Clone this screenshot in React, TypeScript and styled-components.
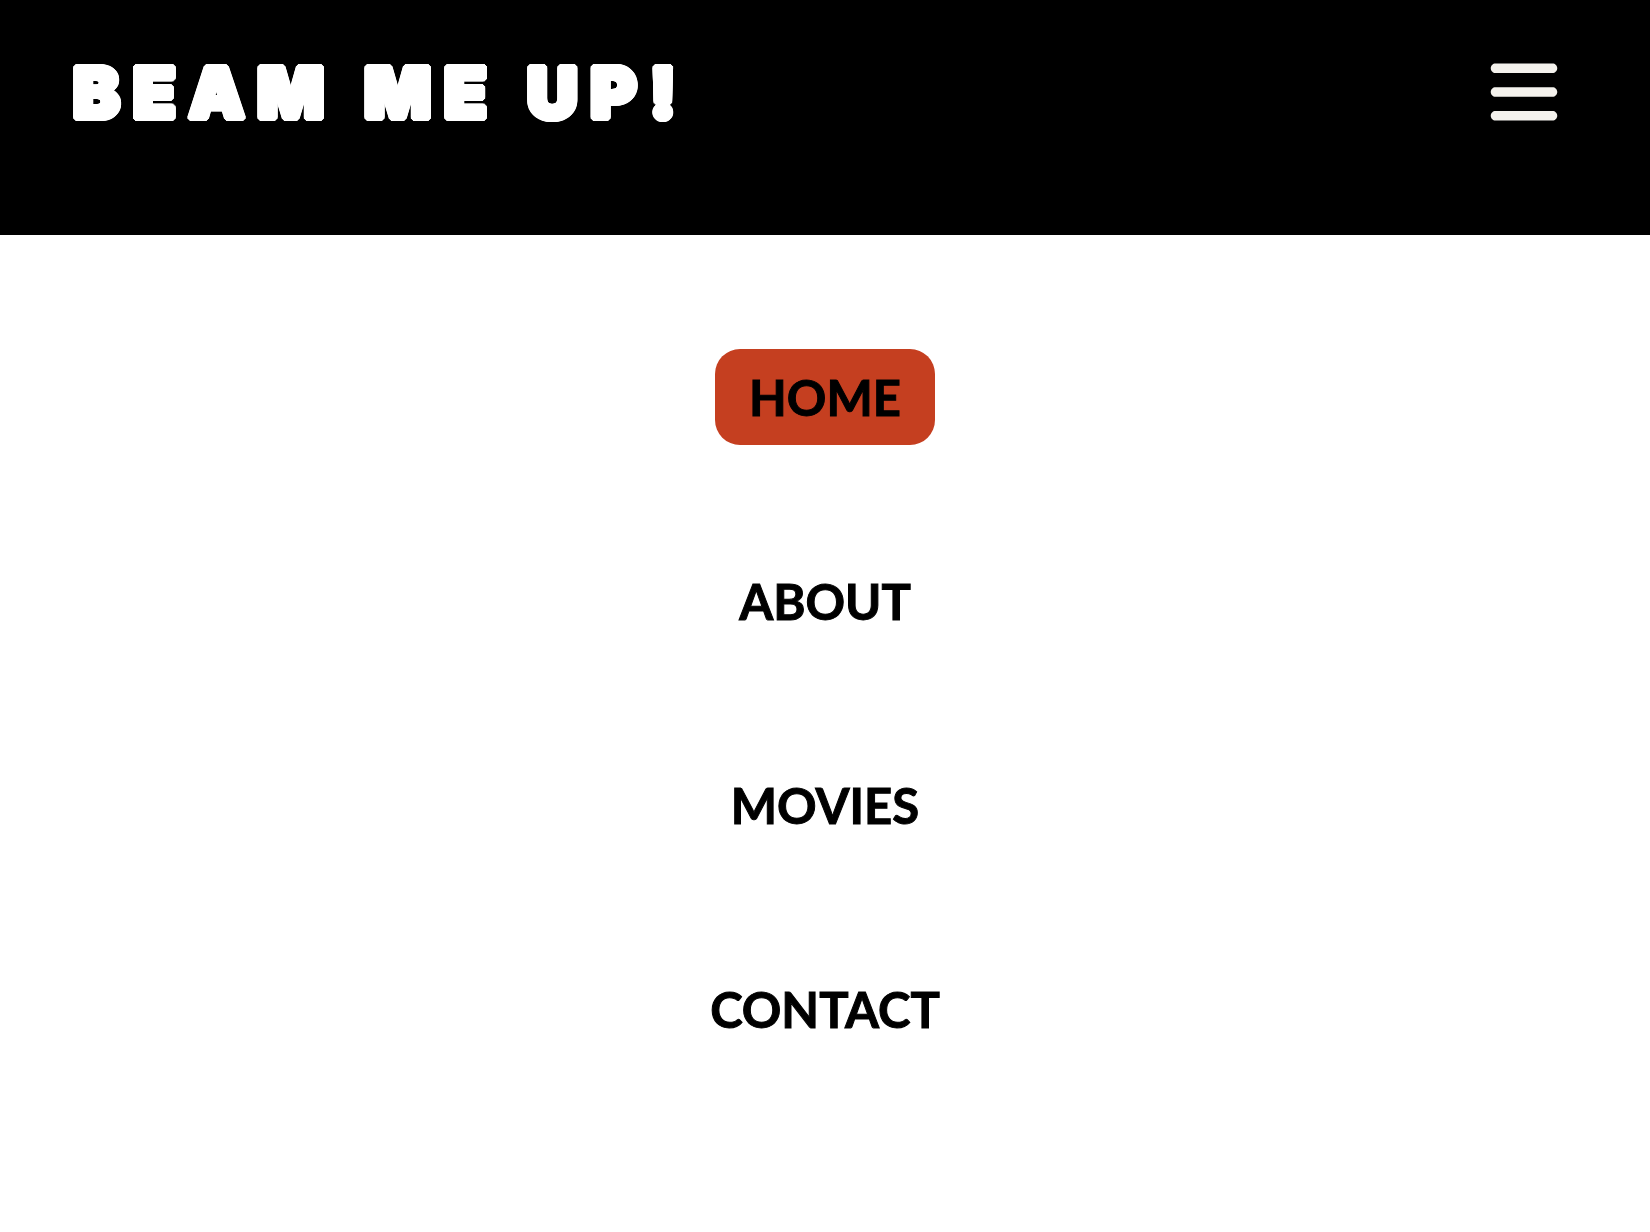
import React from 'react';
import styled, { createGlobalStyle } from 'styled-components';
import { FaBars } from 'react-icons/fa6';

const GlobalStyle = createGlobalStyle`
  *, *::before, *::after { box-sizing: border-box; }
  body {
    margin: 0;
    background: #fff;
    color: #000;
    font-family: Lato, "Noto Sans", sans-serif;
  }
`;

const Header = styled.header`
  display: flex;
  justify-content: space-between;
  align-items: flex-start;
  padding: 53px 88px 102px 73px;
  background: #000;
`;

/* The ring of shadows thickens the letters and rounds their corners. */
const Title = styled.h1`
  margin: 0;
  color: #fff;
  font-family: Inter, "Liberation Sans", sans-serif;
  font-size: 70px;
  font-weight: 900;
  line-height: 80px;
  letter-spacing: 13px;
  text-transform: uppercase;
  text-shadow:
    3px 0 #fff, 3px 1px #fff, 2px 2px #fff, 1px 3px #fff,
    0 3px #fff, -1px 3px #fff, -2px 2px #fff, -3px 1px #fff,
    -3px 0 #fff, -3px -1px #fff, -2px -2px #fff, -1px -3px #fff,
    0 -3px #fff, 1px -3px #fff, 2px -2px #fff, 3px -1px #fff;
`;

const MenuButton = styled.button`
  display: flex;
  padding: 1px 0;
  border: 0;
  background: none;
  color: #f4f2ed;
  font-size: 76px;
  cursor: pointer;
`;

const Menu = styled.ul`
  display: flex;
  flex-direction: column;
  align-items: center;
  gap: 108px;
  margin: 0;
  padding: 114px 24px;
  list-style: none;
`;

const MenuLink = styled.a<{ $active?: boolean }>`
  display: block;
  padding: 18px 34px;
  border-radius: 25px;
  background: ${({ $active }) => ($active ? '#c53f20' : 'transparent')};
  color: #000;
  font-size: 49px;
  font-weight: 700;
  line-height: 60px;
  text-decoration: none;
  text-transform: uppercase;
  -webkit-text-stroke: 1px #000;
`;

const links = ['Home', 'About', 'Movies', 'Contact'];

export default function App() {
  const [open, setOpen] = React.useState(true);
  const [active, setActive] = React.useState('Home');
  return (
    <>
      <GlobalStyle />
      <Header>
        <Title>Beam me up!</Title>
        <MenuButton
          type="button"
          aria-label="Menu"
          aria-expanded={open}
          onClick={() => setOpen(!open)}
        >
          <FaBars aria-hidden="true" />
        </MenuButton>
      </Header>
      {open && (
        <nav>
          <Menu>
            {links.map((name) => (
              <li key={name}>
                <MenuLink
                  href={`#${name.toLowerCase()}`}
                  $active={name === active}
                  onClick={() => setActive(name)}
                >
                  {name}
                </MenuLink>
              </li>
            ))}
          </Menu>
        </nav>
      )}
    </>
  );
}
